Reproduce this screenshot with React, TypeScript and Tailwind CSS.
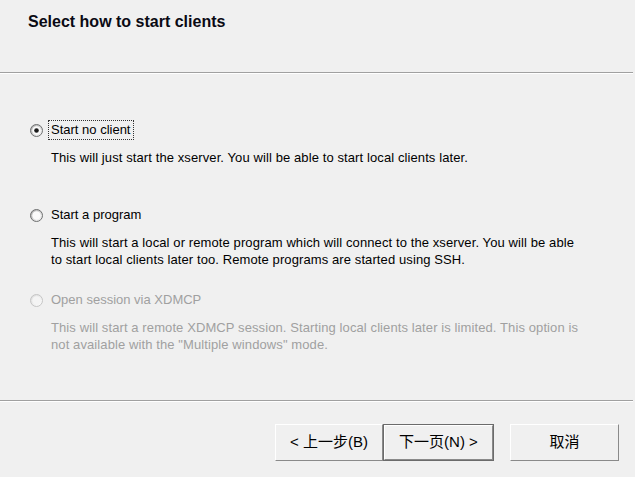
const font = { fontFamily: '"Liberation Sans", "Noto Sans CJK SC", sans-serif' };

type Option = {
  label: string;
  desc: string[];
  checked?: boolean;
  disabled?: boolean;
  focused?: boolean;
};

const options: Option[] = [
  {
    label: "Start no client",
    desc: ["This will just start the xserver. You will be able to start local clients later."],
    checked: true,
    focused: true,
  },
  {
    label: "Start a program",
    desc: [
      "This will start a local or remote program which will connect to the xserver. You will be able",
      "to start local clients later too. Remote programs are started using SSH.",
    ],
  },
  {
    label: "Open session via XDMCP",
    desc: [
      "This will start a remote XDMCP session. Starting local clients later is limited. This option is",
      'not available with the "Multiple windows" mode.',
    ],
    disabled: true,
  },
];

const Radio = ({ checked, disabled }: { checked?: boolean; disabled?: boolean }) => (
  <svg width="13" height="13" viewBox="0 0 13 13" className="shrink-0">
    <defs>
      <linearGradient id={disabled ? "rgd" : "rg"} x1="0" y1="0" x2="1" y2="1">
        <stop offset="0" stopColor={disabled ? "#dadada" : "#a9a9a9"} />
        <stop offset="1" stopColor="#ffffff" />
      </linearGradient>
    </defs>
    <circle cx="6.5" cy="6.5" r="6" fill={`url(#${disabled ? "rgd" : "rg"})`} stroke={disabled ? "#c4c4c4" : "#6f7071"} strokeWidth="1" />
    <circle cx="6.5" cy="6.5" r="4.2" fill={disabled ? "#f4f4f4" : "#fbfbfb"} />
    {checked && <circle cx="6.5" cy="6.5" r="2.3" fill="#1a1a1a" />}
  </svg>
);

const OptionRow = ({ opt }: { opt: Option }) => {
  const color = opt.disabled ? "text-[#a0a0a0]" : "text-black";
  return (
    <div className="h-[85px] flex flex-col">
      <div className="flex items-center h-[16px]">
        <Radio checked={opt.checked} disabled={opt.disabled} />
        <span
          className={`ml-[7px] px-[1px] leading-[16px] text-[13px] ${color} ${
            opt.focused ? "outline outline-1 outline-dotted outline-[#333] outline-offset-[1px]" : ""
          }`}
        >
          {opt.label}
        </span>
      </div>
      <div className={`mt-[12px] pl-[21px] text-[13px] tracking-[0.1px] leading-[16.5px] ${color}`}>
        {opt.desc.map((line) => (
          <div key={line}>{line}</div>
        ))}
      </div>
    </div>
  );
};

const WinButton = ({ label, isDefault, className }: { label: string; isDefault?: boolean; className?: string }) => (
  <div className={`h-[37px] flex ${isDefault ? "border border-[#6b6b6b]" : ""} ${className ?? ""}`}>
    <div
      className={`flex-1 flex items-center justify-center text-[15px] text-black bg-[#f0f0f0] border border-t-white border-l-white border-r-[#8a8a8a] border-b-[#8a8a8a] ${
        isDefault ? "border-r-[#6b6b6b] border-b-[#6b6b6b]" : ""
      }`}
    >
      {label}
    </div>
  </div>
);

export default function App() {
  return (
    <div className="w-[635px] h-[477px] bg-[#f0f0f0] flex flex-col overflow-hidden" style={font}>
      <div className="h-[72px] pl-[28px] pt-[13px]">
        <h1 className="text-[16px] font-bold text-[#0a0a14] leading-[18px]">Select how to start clients</h1>
      </div>
      <div className="w-[633px] h-[2px] border-t border-t-[#a0a0a0] border-b border-b-white" />

      <div className="h-[326px] pl-[30px] pt-[48px]">
        {options.map((opt) => (
          <OptionRow key={opt.label} opt={opt} />
        ))}
      </div>

      <div className="w-[633px] h-[2px] border-t border-t-[#a0a0a0] border-b border-b-white" />
      <div className="flex pt-[22px] pl-[275px]">
        <WinButton label="< 上一步(B)" className="w-[108px]" />
        <WinButton label="下一页(N) >" isDefault className="w-[111px]" />
        <WinButton label="取消" className="w-[109px] ml-[16px]" />
      </div>
    </div>
  );
}
